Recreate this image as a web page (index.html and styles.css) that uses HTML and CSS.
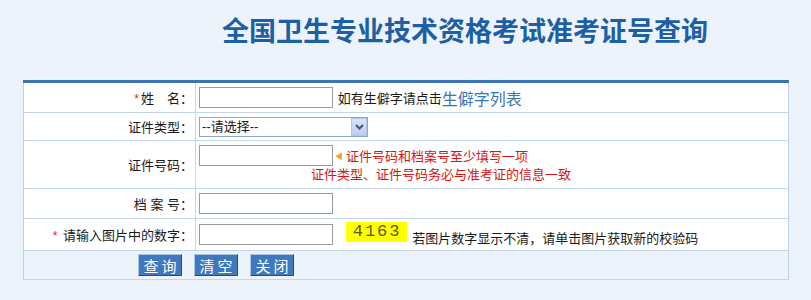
FILE: index.html
```html
<!DOCTYPE html>
<html lang="zh-CN">
<head>
    <meta charset="UTF-8">
    <title>全国卫生专业技术资格考试准考证号查询</title>
    <link rel="stylesheet" href="styles.css">
</head>
<body>
    <div class="title">全国卫生专业技术资格考试准考证号查询</div>

    <table class="query-table">
        <tr class="row-name">
            <td class="label"><span class="star">*</span>姓&emsp;名：</td>
            <td class="field">
                <input type="text" class="txt">
                <span class="tip">如有生僻字请点击</span><a class="link" href="#">生僻字列表</a>
            </td>
        </tr>
        <tr class="row-type">
            <td class="label">证件类型：</td>
            <td class="field">
                <span class="sel-wrap">
                    <select class="sel">
                        <option>--请选择--</option>
                    </select>
                    <span class="sel-btn">
                        <svg width="9" height="6" viewBox="0 0 9 6"><path d="M1 1 L4.5 4.5 L8 1" fill="none" stroke="#3d5580" stroke-width="2"/></svg>
                    </span>
                </span>
            </td>
        </tr>
        <tr class="row-id">
            <td class="label">证件号码：</td>
            <td class="field">
                <div class="line">
                    <input type="text" class="txt">
                    <span class="warn"><span class="arrow">◀</span>证件号码和档案号至少填写一项</span>
                </div>
                <div class="warn second">证件类型、证件号码务必与准考证的信息一致</div>
            </td>
        </tr>
        <tr class="row-file">
            <td class="label">档 案 号：</td>
            <td class="field"><input type="text" class="txt"></td>
        </tr>
        <tr class="row-code">
            <td class="label"><span class="star">*</span> 请输入图片中的数字：</td>
            <td class="field">
                <input type="text" class="txt">
                <span class="captcha">4163</span>
                <span class="tip">若图片数字显示不清，请单击图片获取新的校验码</span>
            </td>
        </tr>
        <tr class="row-btn">
            <td colspan="2">
                <div class="buttons">
                    <button class="btn">查询</button>
                    <button class="btn">清空</button>
                    <button class="btn">关闭</button>
                </div>
            </td>
        </tr>
    </table>
</body>
</html>
```

FILE: styles.css
```css
body {
    margin: 0;
    background-color: #edf3fb;
    font-family: "Liberation Sans", "Noto Sans CJK SC", sans-serif;
    font-size: 13px;
    color: #1a1a1a;
}
.title {
    height: 80px;
    padding-left: 222px;
    line-height: 64px;
    font-size: 27px;
    font-weight: bold;
    color: #1c5fa4;
    box-sizing: border-box;
}
.query-table {
    margin-left: 23px;
    width: 766px;
    border-collapse: collapse;
    border-top: 3px solid #3c73b3;
    border-left: 1px solid #bcd0e6;
    border-right: 1px solid #bcd0e6;
    border-bottom: 1px solid #bcd0e6;
}
.query-table td {
    padding: 0;
    border-bottom: 1px solid #c6d6ea;
    background-color: #fff;
}
.query-table .label {
    width: 169px;
    text-align: right;
    padding-right: 2px;
    border-right: 1px solid #c6d6ea;
    white-space: nowrap;
}
.query-table .field {
    padding-left: 3px;
    white-space: nowrap;
}
.row-name td { height: 29px; }
.row-type td { height: 27px; }
.row-id td { height: 47px; }
.row-file td { height: 29px; }
.row-code td { height: 31px; }
.row-btn td {
    height: 28px;
    background-color: #edf3fb;
}
.star {
    color: #d22;
    font-size: 12px;
    margin-right: 2px;
}
.txt {
    width: 134px;
    height: 21px;
    box-sizing: border-box;
    border: 1px solid #9a9a9a;
    padding: 0 2px;
    margin: 0;
    vertical-align: middle;
    background: #fff;
}
.sel-wrap {
    position: relative;
    display: inline-block;
    vertical-align: middle;
}
.sel {
    display: block;
    width: 169px;
    height: 20px;
    box-sizing: border-box;
    border: 1px solid #8ea9c8;
    font-family: inherit;
    font-size: 13px;
    color: #1a1a1a;
    padding: 0 2px;
    background: #fff;
    appearance: none;
    -webkit-appearance: none;
}
.sel-btn {
    position: absolute;
    top: 1px;
    right: 1px;
    width: 16px;
    height: 18px;
    box-sizing: border-box;
    border: 1px solid #b5c6e8;
    background: linear-gradient(#dbe5f8, #bccdee);
    display: flex;
    align-items: center;
    justify-content: center;
}
.tip {
    vertical-align: middle;
    margin-left: 1px;
}
.link {
    color: #3a76b4;
    font-size: 16px;
    text-decoration: none;
    vertical-align: middle;
}
.line {
    display: flex;
    align-items: center;
}
.warn {
    color: #d41515;
    font-size: 13px;
    line-height: 18px;
}
.line .warn {
    margin-left: 2px;
    margin-top: 3px;
}
.arrow {
    color: #f0a020;
    font-size: 8px;
    margin-right: 3px;
    vertical-align: 2px;
}
.second {
    padding-left: 112px;
}
.captcha {
    display: inline-block;
    margin-left: 9px;
    width: 61px;
    height: 20px;
    line-height: 20px;
    background-color: #ffff00;
    color: #5c5c20;
    font-family: "Liberation Mono", monospace;
    font-size: 17px;
    letter-spacing: 2px;
    text-indent: 2px;
    text-align: center;
    vertical-align: middle;
    margin-top: -6px;
}
.row-code .tip {
    margin-left: 2px;
    position: relative;
    top: 3px;
}
.buttons {
    display: flex;
    gap: 12px;
    padding-left: 114px;
}
.btn {
    width: 44px;
    height: 22px;
    padding: 0;
    background-color: #4078bd;
    color: #fff;
    font-family: inherit;
    font-size: 15px;
    letter-spacing: 3px;
    text-indent: 3px;
    border: 1px solid;
    border-color: #a8c4e6 #2b4c78 #2b4c78 #a8c4e6;
    cursor: pointer;
}
```
